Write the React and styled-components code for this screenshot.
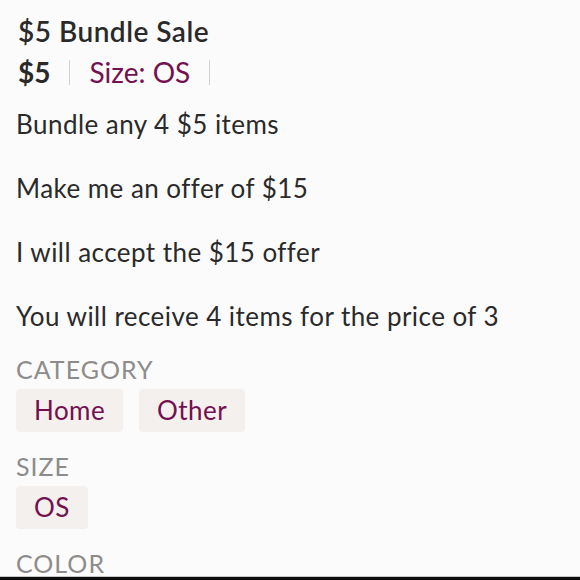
import React from "react";
import styled, { createGlobalStyle } from "styled-components";

const GlobalStyle = createGlobalStyle`
  html, body {
    margin: 0;
    padding: 0;
    background: #fcfbfb;
  }
  * {
    box-sizing: border-box;
  }
`;

const listing = {
  title: "$5 Bundle Sale",
  price: "$5",
  size: "OS",
  description: [
    "Bundle any 4 $5 items",
    "Make me an offer of $15",
    "I will accept the $15 offer",
    "You will receive 4 items for the price of 3",
  ],
  categories: ["Home", "Other"],
  sizes: ["OS"],
};

const Screen = styled.div`
  width: 580px;
  height: 580px;
  display: flex;
  flex-direction: column;
  overflow: hidden;
  font-family: Lato, "Noto Sans", sans-serif;
  color: #2a2a2a;
`;

const Details = styled.div`
  flex: 1;
  overflow: hidden;
  padding: 14px 16px 0 16px;
`;

const Title = styled.h1`
  margin: 0 0 7px 2px;
  font-size: 28px;
  line-height: 34px;
  font-weight: 600;
  letter-spacing: 0.5px;
`;

const PriceRow = styled.div`
  display: flex;
  align-items: center;
  gap: 19px;
  height: 34px;
  line-height: 34px;
  margin-left: 2px;
  font-size: 28px;
`;

const Price = styled.span`
  font-weight: 700;
`;

const Divider = styled.span`
  width: 1px;
  height: 25px;
  background: #d4d0ce;
`;

const SizeLink = styled.span`
  color: #731150;
`;

const Description = styled.div`
  margin-top: 19px;
  display: flex;
  flex-direction: column;
  gap: 32px;
`;

const Line = styled.p`
  margin: 0;
  font-size: 26px;
  line-height: 32px;
  letter-spacing: 0.45px;
`;

const Label = styled.div`
  margin-top: ${(props) => props.top}px;
  font-size: 25px;
  line-height: 30px;
  letter-spacing: 1px;
  color: #8e8c8a;
  text-transform: uppercase;
`;

const Chips = styled.div`
  display: flex;
  gap: 16px;
  margin-top: 5px;
`;

const Chip = styled.span`
  height: 43px;
  line-height: 43px;
  padding: 0 18px;
  border-radius: 4px;
  background: #f3f0ee;
  color: #731150;
  font-size: 26px;
  letter-spacing: 0.45px;
`;

const BottomBar = styled.div`
  height: 4px;
  flex-shrink: 0;
  background: #0c0c0c;
  border-top: 1px solid #c9c6c2;
`;

export default function App() {
  return (
    <>
      <GlobalStyle />
      <Screen>
        <Details>
          <Title>{listing.title}</Title>
          <PriceRow>
            <Price>{listing.price}</Price>
            <Divider />
            <SizeLink>Size: {listing.size}</SizeLink>
            <Divider />
          </PriceRow>
          <Description>
            {listing.description.map((line) => (
              <Line key={line}>{line}</Line>
            ))}
          </Description>
          <Label top={22}>Category</Label>
          <Chips>
            {listing.categories.map((c) => (
              <Chip key={c}>{c}</Chip>
            ))}
          </Chips>
          <Label top={19}>Size</Label>
          <Chips>
            {listing.sizes.map((s) => (
              <Chip key={s}>{s}</Chip>
            ))}
          </Chips>
          <Label top={19}>Color</Label>
        </Details>
        <BottomBar />
      </Screen>
    </>
  );
}
